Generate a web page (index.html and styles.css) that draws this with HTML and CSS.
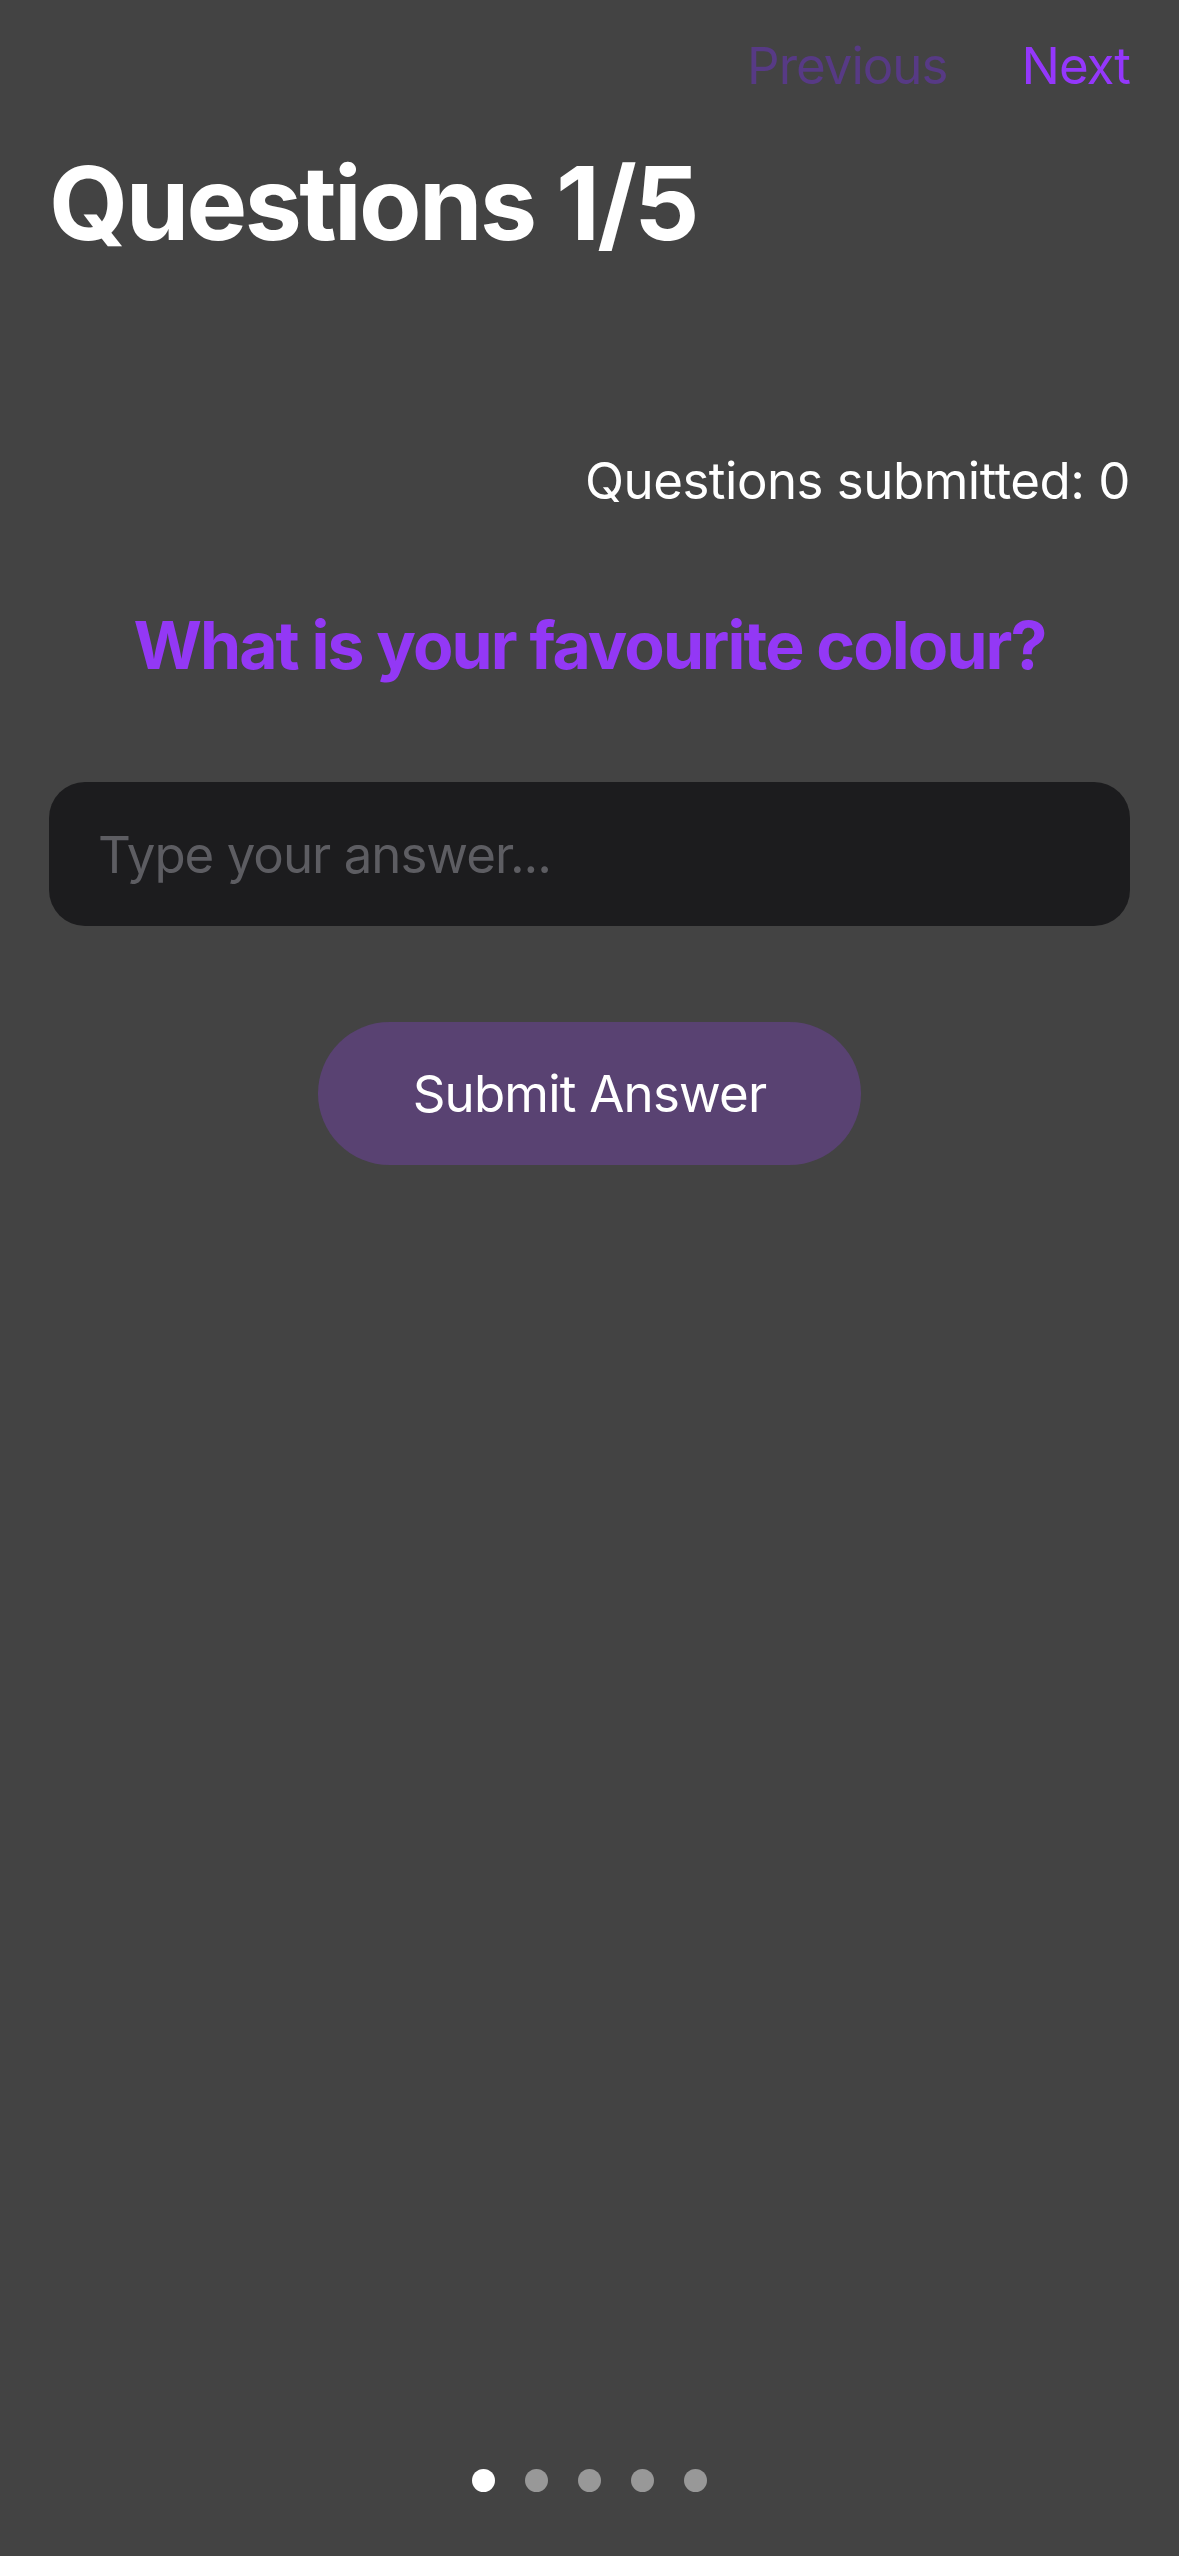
FILE: index.html
```html
<!DOCTYPE html>
<html lang="en">
<head>
<meta charset="utf-8">
<title>Questions</title>
<link rel="stylesheet" href="styles.css">
</head>
<body>
<main class="screen">
  <nav class="navbar">
    <button class="nav-btn nav-prev" type="button">Previous</button>
    <button class="nav-btn nav-next" type="button">Next</button>
  </nav>
  <h1 class="title">Questions 1/5</h1>
  <p class="submitted">Questions submitted: 0</p>
  <h2 class="question">What is your favourite colour?</h2>
  <input class="answer" type="text" placeholder="Type your answer...">
  <div class="submit-row">
    <button class="submit" type="button">Submit Answer</button>
  </div>
  <div class="dots">
    <span class="dot dot-active"></span>
    <span class="dot"></span>
    <span class="dot"></span>
    <span class="dot"></span>
    <span class="dot"></span>
  </div>
</main>
</body>
</html>
```

FILE: styles.css
```css
html, body {
  margin: 0;
  padding: 0;
  background: #434343;
}

body {
  font-family: Inter, "Noto Sans", "Liberation Sans", sans-serif;
  color: #ffffff;
}

.screen {
  box-sizing: border-box;
  min-height: 2556px;
  padding: 35px 49px 64px 49px;
  display: flex;
  flex-direction: column;
}

.navbar {
  display: flex;
  justify-content: flex-end;
  gap: 74px;
}

.nav-btn {
  background: none;
  border: 0;
  padding: 0;
  font-family: inherit;
  font-size: 51px;
  line-height: 61px;
  letter-spacing: -1px;
}

.nav-prev {
  color: #573a85;
}

.nav-next {
  color: #9437fb;
}

.title {
  margin: 46px 0 0 0;
  font-size: 102px;
  line-height: 122px;
  font-weight: 700;
  letter-spacing: -2.6px;
}

.submitted {
  margin: 186px 0 0 0;
  text-align: right;
  font-size: 51px;
  line-height: 61px;
  letter-spacing: -0.5px;
}

.question {
  margin: 95px 0 0 0;
  text-align: center;
  color: #9338f5;
  font-size: 66px;
  line-height: 79px;
  font-weight: 700;
  letter-spacing: -1.9px;
}

.answer {
  box-sizing: border-box;
  margin: 97px 0 0 0;
  width: 100%;
  height: 144px;
  border: 0;
  border-radius: 36px;
  background: #1c1c1e;
  padding: 0 49px;
  font-family: inherit;
  font-size: 51px;
  color: #ffffff;
  letter-spacing: -1px;
  outline: none;
}

.answer::placeholder {
  color: #5d5d62;
}

.submit-row {
  margin-top: 96px;
  display: flex;
  justify-content: center;
}

.submit {
  width: 543px;
  height: 143px;
  border: 0;
  border-radius: 72px;
  background: #594272;
  color: #ffffff;
  font-family: inherit;
  font-size: 51px;
  letter-spacing: -0.8px;
}

.dots {
  margin-top: auto;
  display: flex;
  justify-content: center;
  gap: 30px;
}

.dot {
  width: 23px;
  height: 23px;
  border-radius: 50%;
  background: #989898;
}

.dot-active {
  background: #ffffff;
}
```
